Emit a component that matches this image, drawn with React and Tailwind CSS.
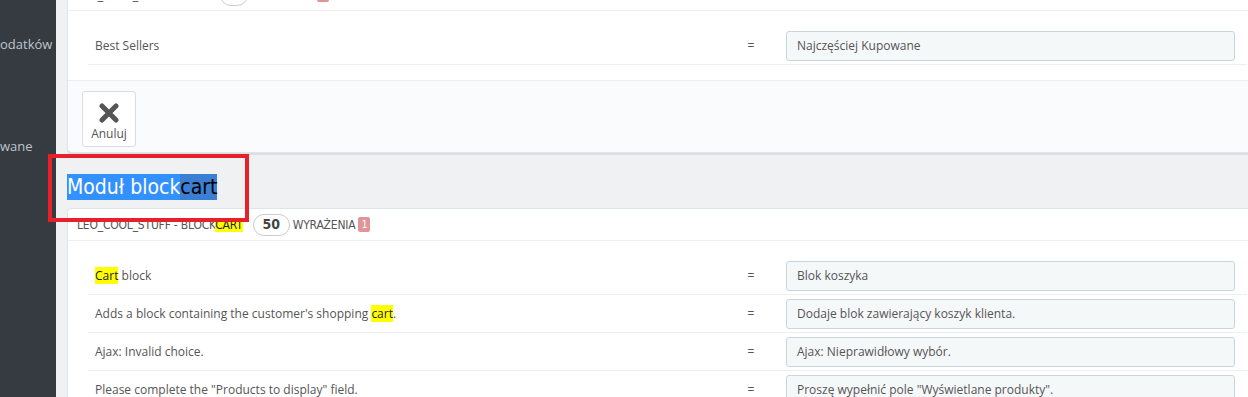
import React from 'react';

const cond = { fontFamily: '"Liberation Sans Narrow", "DejaVu Sans Condensed", "Roboto", sans-serif' };

function Header({ name, hl, count, badge }) {
  return (
    <div className="flex items-center h-[32px] border-b border-[#eeeeee] pl-[9px] text-[12px] tracking-[-0.2px] text-[#555] uppercase" style={cond}>
      <span>
        {name}
        {hl && <span className="bg-[#ffff00] text-[#222]">{hl}</span>}
      </span>
      <span className="ml-[10px] flex items-center justify-center h-[22px] min-w-[26px] px-[9px] rounded-full border border-[#cccccc] font-bold text-[14px] text-[#444]">
        {count}
      </span>
      <span className="ml-[3px]">Wyrażenia</span>
      <span className="ml-[3px] flex items-center justify-center w-[12px] h-[15px] rounded-[2px] bg-[#e0959b] text-white text-[10px]">
        {badge}
      </span>
    </div>
  );
}

function Row({ children, value }) {
  return (
    <div className="flex items-center h-[38px] border-b border-[#eeeeee]">
      <div className="w-[655px] pl-[7px] text-[12px] text-[#555]">{children}</div>
      <div className="w-[16px] text-center text-[12px] text-[#555]">=</div>
      <div className="ml-[27px] w-[449px] h-[30px] flex items-center px-[10px] rounded-[3px] border border-[#c7d6db] bg-[#f5f8f9] text-[12px] text-[#555]">
        {value}
      </div>
    </div>
  );
}

const Hl = ({ children }) => <span className="bg-[#ffff00] text-[#222]">{children}</span>;

export default function App() {
  return (
    <div className="relative flex h-[397px] w-[1248px] overflow-hidden bg-[#eff1f2]" style={{ fontFamily: '"Open Sans", "Liberation Sans", sans-serif' }}>
      {/* sidebar (scrolled, text clipped on the left) */}
      <div className="w-[56px] shrink-0 bg-[#363a41] text-[13px] text-[#bcc5ca] overflow-hidden">
        <div className="mt-[34px] h-[20px] leading-[20px] whitespace-nowrap">odatków</div>
        <div className="mt-[82px] h-[20px] leading-[20px] whitespace-nowrap">wane</div>
      </div>

      <div className="ml-[11px] flex flex-col shrink-0">
        {/* previous module panel */}
        <div className="mt-[-22px] w-[1201px] bg-white border border-[#dfe5e8] rounded-[5px] shadow-[0_2px_0_rgba(0,0,0,0.08)]">
          <Header name="Leo_cool_stuff - blog" count="3" badge="1" />
          <div className="pt-[16px] pb-[15px] px-[20px]">
            <Row value="Najczęściej Kupowane">Best Sellers</Row>
          </div>
          <div className="border-t border-[#eeeeee] bg-[#fafbfc] pt-[10px] pb-[5px] pl-[14px] rounded-b-[5px]">
            <button className="flex flex-col items-center w-[54px] h-[56px] rounded-[3px] border border-[#dddddd] bg-white text-[12px] text-[#555]">
              <svg width="20" height="20" viewBox="0 0 20 20" className="mt-[11px]">
                <path d="M3 3 L17 17 M17 3 L3 17" stroke="#555" strokeWidth="5" strokeLinecap="round" />
              </svg>
              <span className="mt-[3px] leading-[16px]">Anuluj</span>
            </button>
          </div>
        </div>

        {/* module heading */}
        <h2 className="mt-[22px] mb-[8px] h-[25px] leading-[25px] text-[21px] whitespace-nowrap" style={cond}>
          <span className="bg-[#3390ff] text-white py-[1px]">Moduł block</span>
          <span className="bg-[#3b7fd4] text-black py-[1px]">cart</span>
        </h2>

        {/* blockcart panel */}
        <div className="w-[1201px] flex-1 bg-white border border-[#dfe5e8] rounded-t-[5px]">
          <Header name="Leo_cool_stuff - block" hl="cart" count="50" badge="1" />
          <div className="pt-[16px] px-[20px]">
            <Row value="Blok koszyka"><Hl>Cart</Hl> block</Row>
            <Row value="Dodaje blok zawierający koszyk klienta.">
              Adds a block containing the customer's shopping <Hl>cart</Hl>.
            </Row>
            <Row value="Ajax: Nieprawidłowy wybór.">Ajax: Invalid choice.</Row>
            <Row value={'Proszę wypełnić pole "Wyświetlane produkty".'}>
              Please complete the "Products to display" field.
            </Row>
          </div>
        </div>
      </div>

      {/* red annotation frame */}
      <div className="absolute left-[48px] top-[154px] w-[201px] h-[68px] border-4 border-[#e8202a]" />
    </div>
  );
}
